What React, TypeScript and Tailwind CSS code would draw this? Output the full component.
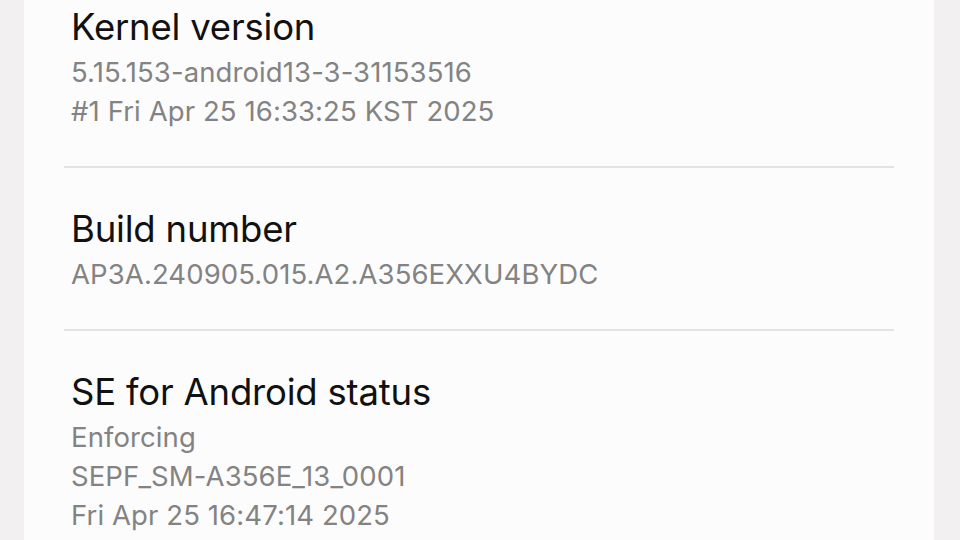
const items = [
  {
    title: "Kernel version",
    lines: ["5.15.153-android13-3-31153516", "#1 Fri Apr 25 16:33:25 KST 2025"],
  },
  {
    title: "Build number",
    lines: ["AP3A.240905.015.A2.A356EXXU4BYDC"],
  },
  {
    title: "SE for Android status",
    lines: ["Enforcing", "SEPF_SM-A356E_13_0001", "Fri Apr 25 16:47:14 2025"],
  },
];

export default function App() {
  return (
    <div
      className="w-[960px] h-[540px] overflow-hidden bg-[#f2f0f1] flex"
      style={{ fontFamily: "Inter, 'Noto Sans', sans-serif" }}
    >
      <div className="ml-[24px] w-[910px] h-full bg-[#fcfcfc] overflow-hidden">
        <div className="-mt-[34px]">
          {items.map((item, i) => (
            <div key={item.title}>
              {i > 0 && <div className="mx-[40px] h-[2px] bg-[#e3e3e3]" />}
              <div className="px-[47px] pt-[35px] pb-[35px]">
                <div className="text-[36.5px] leading-[52px] text-[#111111] tracking-[-0.2px]">
                  {item.title}
                </div>
                {item.lines.map((line) => (
                  <div key={line} className="text-[27.5px] leading-[39px] text-[#838383] tracking-[0.1px]">
                    {line}
                  </div>
                ))}
              </div>
            </div>
          ))}
        </div>
      </div>
    </div>
  );
}
